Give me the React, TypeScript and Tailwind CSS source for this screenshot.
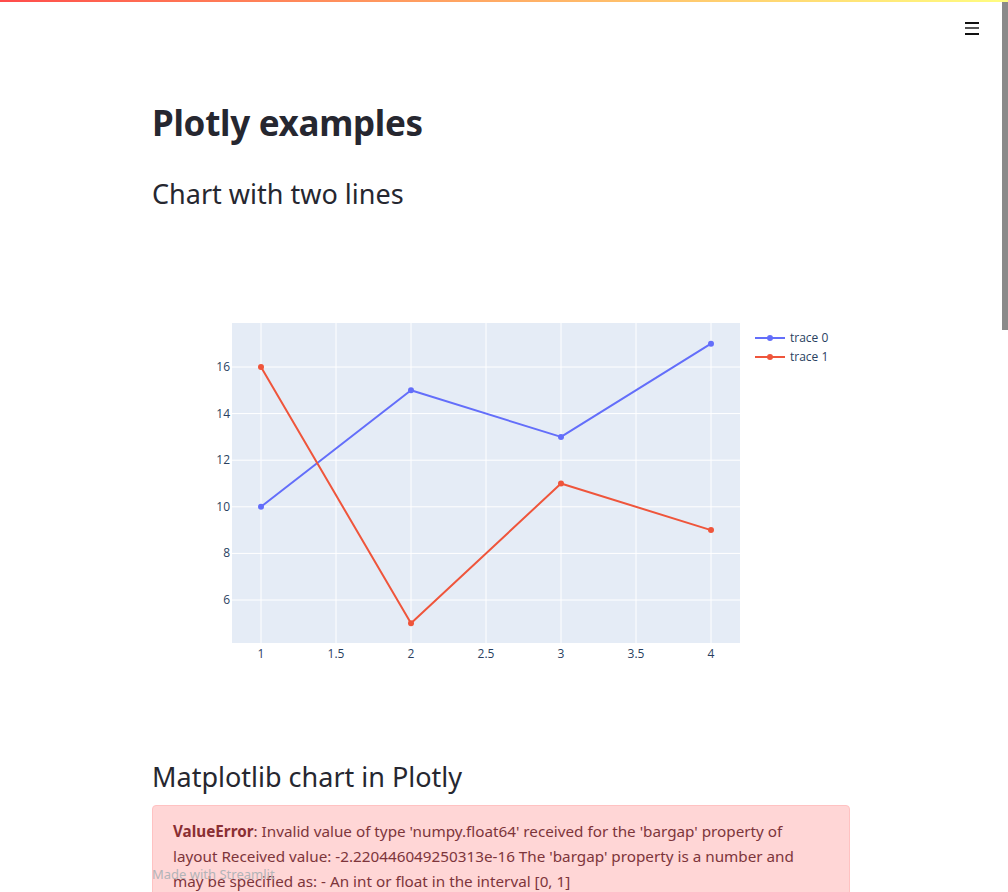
const font = { fontFamily: '"Noto Sans", "Open Sans", sans-serif' };

const blue = "#636efa";
const red = "#ef553b";
const axisText = "#2a3f5f";

type Pt = [number, number];

const trace0: Pt[] = [
  [1, 10],
  [2, 15],
  [3, 13],
  [4, 17],
];
const trace1: Pt[] = [
  [1, 16],
  [2, 5],
  [3, 11],
  [4, 9],
];

// plot area inside the figure: x 80..588, y 100..420
const px = (v: number) => 109 + (v - 1) * 150;
const py = (v: number) => 144 + (16 - v) * 23.3;

function Trace({ pts, color }: { pts: Pt[]; color: string }) {
  const d = pts.map(([x, y]) => `${px(x)},${py(y)}`).join(" ");
  return (
    <g>
      <polyline points={d} fill="none" stroke={color} strokeWidth={2} strokeLinejoin="round" />
      {pts.map(([x, y]) => (
        <circle key={x} cx={px(x)} cy={py(y)} r={3} fill={color} />
      ))}
    </g>
  );
}

function LineChart() {
  const xTicks = [1, 1.5, 2, 2.5, 3, 3.5, 4];
  const yTicks = [6, 8, 10, 12, 14, 16];
  return (
    <svg width={698} height={500} className="block">
      <rect x={80} y={100} width={508} height={320} fill="#e5ecf6" />
      {xTicks.map((t) => (
        <line key={t} x1={px(t)} x2={px(t)} y1={100} y2={420} stroke="#fff" strokeWidth={1} />
      ))}
      {yTicks.map((t) => (
        <line key={t} x1={80} x2={588} y1={py(t)} y2={py(t)} stroke="#fff" strokeWidth={1} />
      ))}
      <g fontFamily='"Open Sans", verdana, arial, sans-serif' fontSize={12} fill={axisText}>
        {xTicks.map((t) => (
          <text key={t} x={px(t)} y={435} textAnchor="middle">
            {t}
          </text>
        ))}
        {yTicks.map((t) => (
          <text key={t} x={78} y={py(t) + 4} textAnchor="end">
            {t}
          </text>
        ))}
      </g>
      <Trace pts={trace0} color={blue} />
      <Trace pts={trace1} color={red} />
      <g fontFamily='"Open Sans", verdana, arial, sans-serif' fontSize={12} fill={axisText}>
        <line x1={603} x2={633} y1={115} y2={115} stroke={blue} strokeWidth={2} />
        <circle cx={618} cy={115} r={3} fill={blue} />
        <text x={638} y={119}>trace 0</text>
        <line x1={603} x2={633} y1={134} y2={134} stroke={red} strokeWidth={2} />
        <circle cx={618} cy={134} r={3} fill={red} />
        <text x={638} y={138}>trace 1</text>
      </g>
    </svg>
  );
}

export default function App() {
  return (
    <div className="relative h-[892px] w-full overflow-hidden bg-white text-[#262730]" style={font}>
      <div className="h-[2px] w-full bg-gradient-to-r from-[#ff4b4b] to-[#fffd80]" />
      <button className="absolute right-[29px] top-[21px] p-0">
        <svg width={14} height={14} viewBox="0 0 14 14">
          <rect x={0} y={1} width={14} height={2} fill="#111" />
          <rect x={0} y={6} width={14} height={2} fill="#555" />
          <rect x={0} y={12} width={14} height={2} fill="#111" />
        </svg>
      </button>
      <div className="absolute right-0 top-[2px] h-[328px] w-[6px] bg-[#8a8a8a]" />

      <main className="ml-[152px] w-[698px] pt-[95px]">
        <h1 className="text-[35px] font-bold leading-[52px] tracking-[-0.3px]">Plotly examples</h1>
        <h3 className="mt-[25px] text-[27px] font-normal leading-[40px]">Chart with two lines</h3>
        <div className="mt-[9px]">
          <LineChart />
        </div>
        <h3 className="mt-[34px] text-[27px] font-normal leading-[40px]">Matplotlib chart in Plotly</h3>
        <div className="mt-[8px] rounded-[4px] border border-[#ffc2c2] bg-[#ffd6d6] px-[20px] pt-[13px] pb-4 text-[15.25px] leading-[25px] text-[#7d353b]">
          <strong className="font-bold text-[#8a2f33]">ValueError</strong>: Invalid value of type
          'numpy.float64' received for the 'bargap' property of
          <br />
          layout Received value: -2.220446049250313e-16 The 'bargap' property is a number and
          <br />
          may be specified as: - An int or float in the interval [0, 1]
        </div>
      </main>

      <div className="absolute left-[152px] top-[866px] text-[13px] leading-[16px] text-[#b3b4b8]">
        Made with Streamlit
      </div>
    </div>
  );
}
